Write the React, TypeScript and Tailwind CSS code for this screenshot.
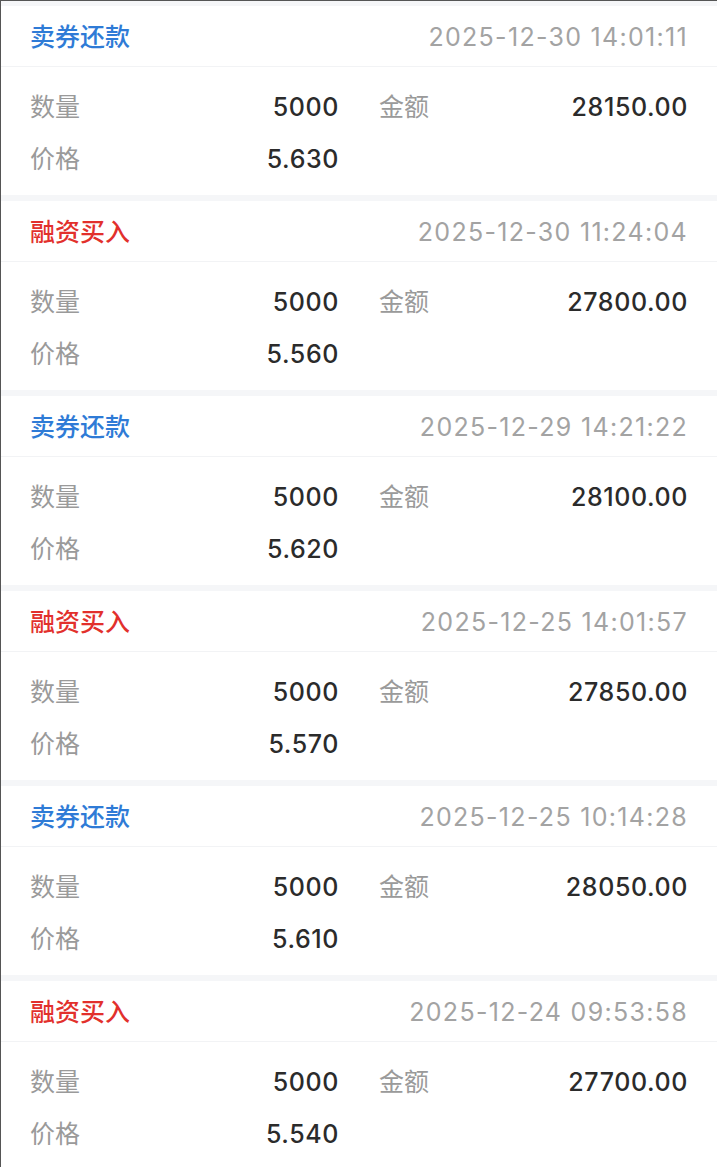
import React from "react";

type Trade = {
  type: "sell" | "buy";
  time: string;
  qty: string;
  amount: string;
  price: string;
};

const trades: Trade[] = [
  { type: "sell", time: "2025-12-30 14:01:11", qty: "5000", amount: "28150.00", price: "5.630" },
  { type: "buy", time: "2025-12-30 11:24:04", qty: "5000", amount: "27800.00", price: "5.560" },
  { type: "sell", time: "2025-12-29 14:21:22", qty: "5000", amount: "28100.00", price: "5.620" },
  { type: "buy", time: "2025-12-25 14:01:57", qty: "5000", amount: "27850.00", price: "5.570" },
  { type: "sell", time: "2025-12-25 10:14:28", qty: "5000", amount: "28050.00", price: "5.610" },
  { type: "buy", time: "2025-12-24 09:53:58", qty: "5000", amount: "27700.00", price: "5.540" },
];

const Field = ({ label, value }: { label: string; value: string }) => (
  <div className="flex h-[52px] items-center justify-between">
    <span className="text-[#9a9a9a]">{label}</span>
    <span className="font-medium tracking-[0.6px] text-[#2b2b2b]">{value}</span>
  </div>
);

const TradeCard = ({ trade }: { trade: Trade }) => {
  const sell = trade.type === "sell";
  return (
    <div className="bg-white">
      <div className="flex h-[60px] items-center justify-between px-[29px] pt-[2px]">
        <span className={sell ? "font-medium text-[#2f7bd6]" : "font-medium text-[#e2302c]"}>
          {sell ? "卖券还款" : "融资买入"}
        </span>
        <span className="tracking-[1.3px] text-[#a3a3a3]">{trade.time}</span>
      </div>
      <div className="h-px bg-[#f2f3f5]" />
      <div className="grid grid-cols-2 gap-x-10 px-[29px] pt-[14px] pb-[10px]">
        <Field label="数量" value={trade.qty} />
        <Field label="金额" value={trade.amount} />
        <Field label="价格" value={trade.price} />
      </div>
    </div>
  );
};

export default function App() {
  return (
    <div
      className="min-h-screen border-t border-l border-[#555] bg-[#f5f6f8] pt-[5px] text-[25px] leading-none"
      style={{ fontFamily: 'Inter, "Noto Sans CJK SC", sans-serif' }}
    >
      <div className="flex flex-col gap-[6px]">
        {trades.map((t, i) => (
          <TradeCard key={i} trade={t} />
        ))}
      </div>
    </div>
  );
}
